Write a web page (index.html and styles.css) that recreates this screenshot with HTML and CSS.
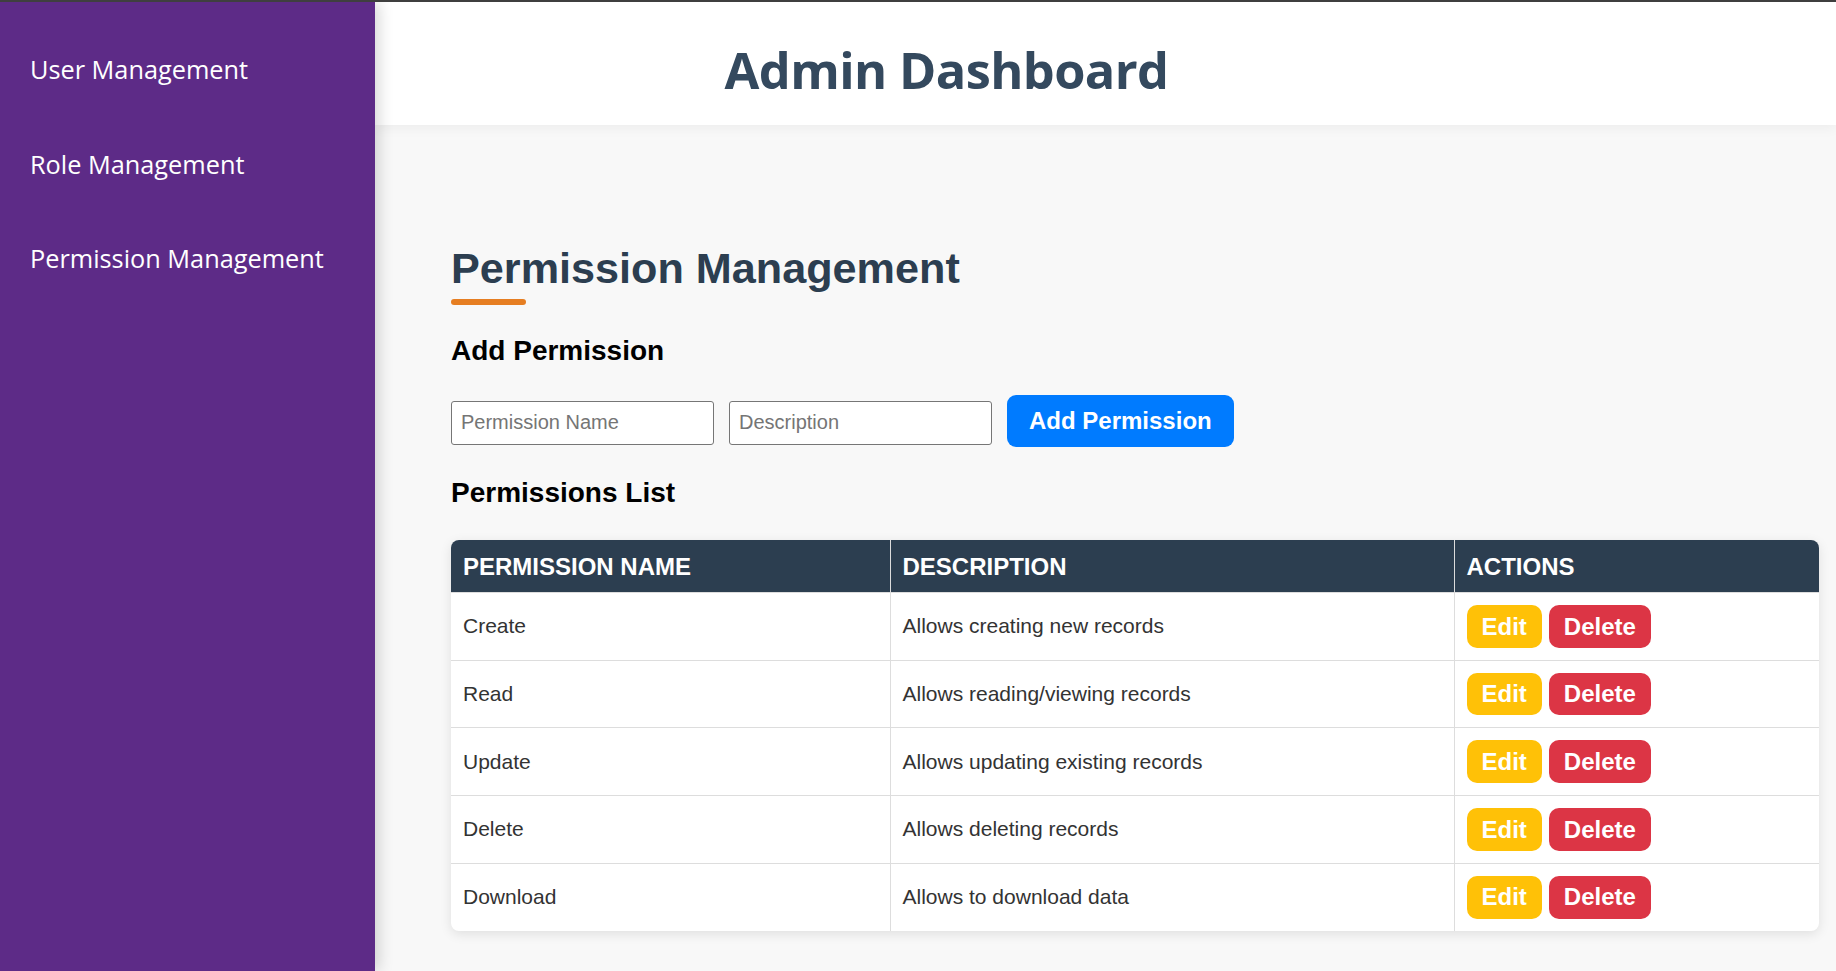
FILE: index.html
```html
<!DOCTYPE html>
<html lang="en">
<head>
<meta charset="utf-8">
<title>Admin Dashboard</title>
<link rel="stylesheet" href="styles.css">
</head>
<body>
  <aside class="sidebar">
    <ul class="nav">
      <li class="nav-item">User Management</li>
      <li class="nav-item">Role Management</li>
      <li class="nav-item">Permission Management</li>
    </ul>
  </aside>
  <main class="main">
    <header class="topbar">
      <h1 class="title">Admin Dashboard</h1>
    </header>
    <section class="content">
      <h2 class="page-title">Permission Management</h2>
      <h3 class="section-title add-title">Add Permission</h3>
      <div class="form-row">
        <input class="field" type="text" placeholder="Permission Name">
        <input class="field" type="text" placeholder="Description">
        <button class="btn btn-primary">Add Permission</button>
      </div>
      <h3 class="section-title list-title">Permissions List</h3>
      <div class="table-wrap">
        <table class="perm-table">
          <colgroup>
            <col class="col-name">
            <col class="col-desc">
            <col class="col-actions">
          </colgroup>
          <thead>
            <tr><th>Permission Name</th><th>Description</th><th>Actions</th></tr>
          </thead>
          <tbody>
            <tr><td>Create</td><td>Allows creating new records</td><td><div class="actions"><button class="btn btn-edit">Edit</button><button class="btn btn-delete">Delete</button></div></td></tr>
            <tr><td>Read</td><td>Allows reading/viewing records</td><td><div class="actions"><button class="btn btn-edit">Edit</button><button class="btn btn-delete">Delete</button></div></td></tr>
            <tr><td>Update</td><td>Allows updating existing records</td><td><div class="actions"><button class="btn btn-edit">Edit</button><button class="btn btn-delete">Delete</button></div></td></tr>
            <tr><td>Delete</td><td>Allows deleting records</td><td><div class="actions"><button class="btn btn-edit">Edit</button><button class="btn btn-delete">Delete</button></div></td></tr>
            <tr><td>Download</td><td>Allows to download data</td><td><div class="actions"><button class="btn btn-edit">Edit</button><button class="btn btn-delete">Delete</button></div></td></tr>
          </tbody>
        </table>
      </div>
    </section>
  </main>
</body>
</html>
```
FILE: styles.css
```css
* { box-sizing: border-box; }

html, body { height: 100%; }

body {
  margin: 0;
  border-top: 2px solid #3f3f3f;
  display: flex;
  min-height: 100vh;
  overflow: hidden;
  font-family: "Liberation Sans", Arial, sans-serif;
  background: #f8f8f8;
}

.sidebar {
  width: 375px;
  flex: 0 0 375px;
  background: #5d2b87;
  position: relative;
  z-index: 2;
  box-shadow: 4px 0 14px rgba(0, 0, 0, 0.16);
  padding-top: 20px;
}

.nav {
  list-style: none;
  margin: 0;
  padding: 0;
}

.nav-item {
  font-family: "Open Sans", "Noto Sans", sans-serif;
  font-size: 25.3px;
  line-height: 30px;
  color: #ffffff;
  padding: 32.25px 0 32.25px 30px;
}

.main {
  flex: 1;
  display: flex;
  flex-direction: column;
  background: #f8f8f8;
}

.topbar {
  background: #ffffff;
  height: 123px;
  padding: 38px 318px 0 0;
  text-align: center;
  box-shadow: 0 3px 12px rgba(0, 0, 0, 0.05);
  position: relative;
  z-index: 1;
}

.title {
  margin: 0;
  font-family: "Open Sans", "Noto Sans", sans-serif;
  font-weight: 700;
  font-size: 50.5px;
  line-height: 60px;
  letter-spacing: -0.6px;
  color: #34495e;
}

.content {
  padding: 118px 17px 0 76px;
}

.page-title {
  margin: 0;
  font-size: 43.2px;
  line-height: 50px;
  font-weight: 700;
  color: #2c3e50;
}

.page-title::after {
  content: "";
  display: block;
  width: 75px;
  height: 6px;
  margin-top: 6px;
  border-radius: 3px;
  background: #e67e22;
}

.section-title {
  margin: 0;
  font-size: 28px;
  line-height: 32px;
  font-weight: 700;
  color: #000000;
}

.add-title { margin-top: 29.5px; }

.form-row {
  display: flex;
  align-items: center;
  gap: 15px;
  margin-top: 28.5px;
}

.field {
  width: 263px;
  height: 44px;
  margin-top: 3px;
  padding: 0 9px;
  border: 1px solid #767676;
  border-radius: 3px;
  background: #ffffff;
  font-family: "Liberation Sans", Arial, sans-serif;
  font-size: 20px;
  color: #333;
}

.field::placeholder { color: #757575; }

.btn {
  border: none;
  font-family: "Liberation Sans", Arial, sans-serif;
  font-weight: 700;
  color: #ffffff;
  cursor: pointer;
}

.btn-primary {
  background: #007bff;
  font-size: 24px;
  line-height: 28px;
  padding: 12px 22px;
  border-radius: 9px;
}

.list-title { margin-top: 29.5px; }

.table-wrap {
  margin-top: 31.5px;
  width: 1368px;
  border-radius: 8px;
  overflow: hidden;
  background: #ffffff;
  box-shadow: 0 3px 12px rgba(0, 0, 0, 0.1);
}

.perm-table {
  width: 100%;
  border-collapse: collapse;
  table-layout: fixed;
}

.col-name { width: 439px; }
.col-desc { width: 564px; }
.col-actions { width: 365px; }

.perm-table th {
  background: #2c3e50;
  color: #ffffff;
  text-align: left;
  font-size: 24px;
  line-height: 27px;
  font-weight: 700;
  text-transform: uppercase;
  padding: 12.5px 12px;
  border-left: 1px solid #dcdcdc;
}

.perm-table th:first-child,
.perm-table td:first-child { border-left: none; }

.perm-table td {
  font-size: 21px;
  color: #333333;
  padding: 12px 12px;
  border-left: 1px solid #dddddd;
  border-top: 1px solid #dddddd;
  vertical-align: middle;
}

.actions {
  display: flex;
  gap: 7px;
}

.btn-edit,
.btn-delete {
  font-size: 24px;
  line-height: 27.7px;
  padding: 7.5px 15px;
  border-radius: 10px;
}

.btn-edit { background: #ffc107; }
.btn-delete { background: #dc3545; }
```
